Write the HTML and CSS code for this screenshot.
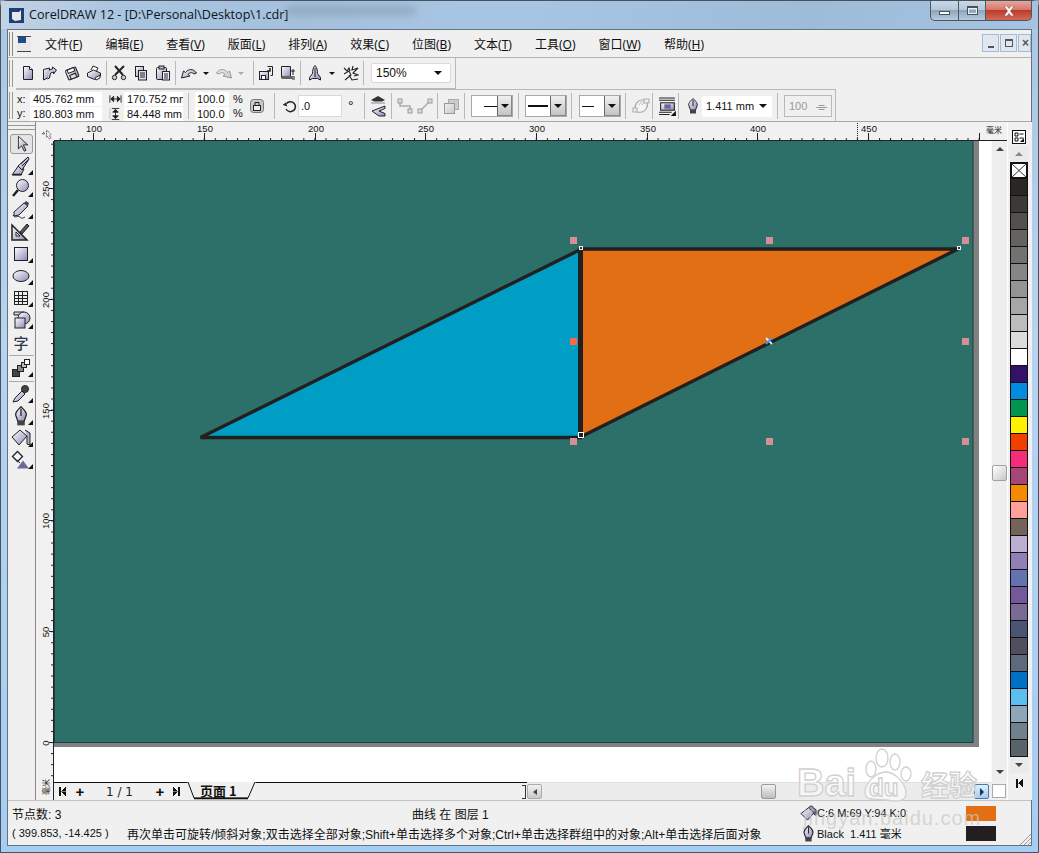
FILE: index.html
```html
<!DOCTYPE html>
<html lang="zh">
<head>
<meta charset="utf-8">
<title>CorelDRAW 12</title>
<link rel="stylesheet" href="styles.css">
</head>
<body>
<svg class="defs" xmlns="http://www.w3.org/2000/svg">
  <defs>
    <linearGradient id="g" x1="0" y1="0" x2="1" y2="1"><stop offset="0" stop-color="#fff"/><stop offset="1" stop-color="#8a8ab8"/></linearGradient>
    <linearGradient id="gd" x1="0" y1="0" x2="1" y2="1"><stop offset="0" stop-color="#eee"/><stop offset="1" stop-color="#c8c8d4"/></linearGradient>
    <pattern id="tickx" x="4.44" y="122" width="11.07" height="19" patternUnits="userSpaceOnUse"><rect x="0" y="16" width="1" height="2" fill="#222"/></pattern>
    <pattern id="ticky" x="36" y="10.72" width="18" height="11.08" patternUnits="userSpaceOnUse"><rect x="15" y="0" width="2" height="1" fill="#222"/></pattern>
    <symbol id="i-new" viewBox="0 0 16 16"><path d="M3.5 1.5h6l3 3v10h-9z" fill="url(#g)" stroke="#222"/><path d="M9.5 1.5v3h3" fill="#fff" stroke="#222"/></symbol>
    <symbol id="i-open" viewBox="0 0 16 16"><path d="M1.5 4.5l6-1.500v9l-6 3z" fill="url(#g)" stroke="#222"/><path d="M7.500 5l3-1V2l4 3-3 4V7l-3 1-1 5-2 1" fill="url(#g)" stroke="#222"/></symbol>
    <symbol id="i-save" viewBox="0 0 16 16"><g transform="rotate(-22 8 8)"><rect x="2.500" y="3.500" width="11" height="10" rx="1" fill="url(#g)" stroke="#222"/><rect x="4.500" y="3.500" width="7" height="3.500" fill="#fff" stroke="#222"/><rect x="5" y="9.500" width="6" height="4" fill="#ddd" stroke="#222"/></g></symbol>
    <symbol id="i-print" viewBox="0 0 16 16"><path d="M5 5l2-4 5 2-2 4" fill="#fff" stroke="#222"/><path d="M1.500 8l6-3 7 3v3l-6 3.500-7-3z" fill="url(#g)" stroke="#222"/><path d="M9 13l5-3v3l-4 2z" fill="#fff" stroke="#222"/></symbol>
    <symbol id="i-cut" viewBox="0 0 16 16"><path d="M4 1l8 9M13 1L4 10" stroke="#222" stroke-width="2" fill="none"/><circle cx="3.500" cy="12.500" r="2.200" fill="#ccd" stroke="#222"/><circle cx="12.500" cy="12.500" r="2.200" fill="#ccd" stroke="#222"/></symbol>
    <symbol id="i-copy" viewBox="0 0 16 16"><rect x="2.500" y="1.500" width="8" height="10" fill="url(#g)" stroke="#222"/><rect x="5.500" y="5.500" width="8" height="9.500" fill="#dde" stroke="#222"/><path d="M7 8h5M7 10h5M7 12h5" stroke="#222"/></symbol>
    <symbol id="i-paste" viewBox="0 0 16 16"><rect x="1.500" y="2.500" width="10" height="12" rx="1" fill="url(#g)" stroke="#222"/><rect x="4" y="1" width="5" height="3" fill="#bbc" stroke="#222"/><rect x="7.500" y="6.500" width="7" height="8.500" fill="#eef" stroke="#222"/><path d="M9 9h4M9 11h4M9 13h4" stroke="#222"/></symbol>
    <symbol id="i-undo" viewBox="0 0 16 16"><path d="M.5 13l2-7 2 1.500C7 4 12 3 15.500 8l-2.500 1C11 7 8 7.500 7 9.500l2 1.500z" fill="url(#g)" stroke="#222"/></symbol>
    <symbol id="i-redo" viewBox="0 0 16 16"><path d="M15.500 13l-2-7-2 1.500C9 4 4 3 .5 8L3 9c2-2 5-1.500 6 .5L7 11z" fill="url(#gd)" stroke="#999"/></symbol>
    <symbol id="i-import" viewBox="0 0 16 16"><rect x="1.500" y="6.500" width="9" height="8" fill="url(#g)" stroke="#222"/><rect x="3.500" y="10.500" width="4" height="4" fill="#fff" stroke="#222"/><path d="M9.500 1.500h5v9h-2" fill="#eee" stroke="#222"/><path d="M12 3v3H9" stroke="#222" stroke-width="1.500" fill="none"/></symbol>
    <symbol id="i-export" viewBox="0 0 16 16"><path d="M1.500 1.500h9v11h-9z" fill="url(#g)" stroke="#222"/><rect x="1.500" y="11" width="11" height="3" fill="#666"/><path d="M11 6h4M13 4v6M12 12h3M12 14h3" stroke="#222"/></symbol>
    <symbol id="i-launch" viewBox="0 0 16 16"><path d="M8 .5c2 2 2.500 5 2.500 8l3 4v2.500l-3-1.500h-5l-3 1.500V12.500l3-4c0-3 .5-6 2.500-8z" fill="url(#g)" stroke="#222"/><path d="M8 3v9" stroke="#222"/></symbol>
    <symbol id="i-online" viewBox="0 0 16 16"><path d="M1 3l3 3 2-3 1 3M1 9l5-3 2 4-6 5M6 10l3 5 6-1M10 1l-1 4 6-2-5 5 5 2-4 1" fill="none" stroke="#222" stroke-width="1.100"/></symbol>
    <symbol id="i-w" viewBox="0 0 14 14"><path d="M1 3v8M13 3v8M2 7h10M2 7l3-3v6zM12 7L9 4v6z" stroke="#222" fill="#222"/></symbol>
    <symbol id="i-h" viewBox="0 0 14 14"><path d="M3 1h8M3 13h8M7 2v10M7 2L4 5h6zM7 12L4 9h6z" stroke="#222" fill="#222"/><path d="M1 1v12" stroke="#999" stroke-dasharray="1 1"/></symbol>
    <symbol id="i-lock" viewBox="0 0 14 14"><rect x=".5" y=".5" width="13" height="13" rx="3" fill="#c8c8c8" stroke="#777"/><rect x="3.500" y="6.500" width="7" height="5" fill="#eee" stroke="#222"/><path d="M5 6V3.500h4V6" fill="none" stroke="#222"/></symbol>
    <symbol id="i-rot" viewBox="0 0 14 14"><path d="M3.500 4.500A5 5 0 1 1 3 10" fill="none" stroke="#222" stroke-width="1.500"/><path d="M0 7h5L2.500 3.500z" fill="#222" transform="rotate(20 3 5)"/></symbol>
    <symbol id="i-mirror" viewBox="0 0 16 24"><path d="M1 6l7-4 7 4-3 1.500H4z" fill="#333"/><path d="M1 9h14" stroke="#888"/><path d="M2 17l13-5v2.500L9 17l6 2.500V22H9z" fill="url(#g)" stroke="#222"/></symbol>
    <symbol id="i-node1" viewBox="0 0 16 16"><path d="M3 3v5h10v6" fill="none" stroke="#aaa" stroke-width="1.500"/><rect x="1" y="1" width="4" height="4" fill="#ddd" stroke="#999"/><rect x="11" y="11" width="4" height="4" fill="#ddd" stroke="#999"/></symbol>
    <symbol id="i-node2" viewBox="0 0 16 16"><path d="M3 13L13 3" stroke="#aaa" stroke-width="1.500"/><rect x="1" y="11" width="4" height="4" fill="#ddd" stroke="#999"/><rect x="11" y="1" width="4" height="4" fill="#ddd" stroke="#999"/></symbol>
    <symbol id="i-order" viewBox="0 0 16 16"><rect x="5.500" y="1.500" width="10" height="10" fill="#ccc" stroke="#aaa"/><rect x="1.500" y="5.500" width="10" height="10" fill="url(#gd)" stroke="#999"/></symbol>
    <symbol id="i-wrap" viewBox="0 0 18 16"><path d="M3 10c0-4 3-8 7-8h4c2 3 2 6 0 9-2 3-6 4-9 3" fill="#f4f4f4" stroke="#aaa" stroke-width="1.200"/><path d="M7 7l3-4M10 7l3-4" stroke="#bbb"/><rect x="1" y="10" width="4" height="4" fill="#eee" stroke="#aaa"/><rect x="12" y="1" width="5" height="4" fill="#eee" stroke="#aaa"/></symbol>
    <symbol id="i-order2" viewBox="0 0 16 18"><path d="M0 1h15M0 3h15" stroke="#222"/><rect x="1.500" y="5.500" width="13" height="7" fill="url(#g)" stroke="#222"/><rect x="5" y="7" width="6" height="4" fill="#6a64a8"/><path d="M0 14.500h12M0 16.500h10" stroke="#222"/><path d="M16 13v5h-5z" fill="#111"/></symbol>
    <symbol id="i-pen" viewBox="0 0 12 16"><path d="M6 .5c3 3 5 5 4 7.500l-1.500 4h-5L2 8C1 5.500 3 3.500 6 .5z" fill="url(#g)" stroke="#222"/><path d="M6 2v6" stroke="#222"/><rect x="3" y="12" width="6" height="3.500" fill="#444"/></symbol>
    <symbol id="i-fill" viewBox="0 0 18 18"><path d="M1 9l8-6 6 5-7 8z" fill="url(#g)" stroke="#222"/><path d="M9 3c2-3 5-2 5 0l3 2v6l-2-1V7" fill="#9a9ab8" stroke="#222"/></symbol>
    <symbol id="t-arrow" viewBox="0 0 20 20"><path d="M6 1.500v14l3.500-3.500 3 6 2-1-3-6h5z" fill="url(#g)" stroke="#222"/></symbol>
    <symbol id="t-shape" viewBox="0 0 20 20"><path d="M1 19L8 9l5 4-3 6z" fill="url(#g)" stroke="#222"/><path d="M7 10L17 1l1 2-7 11z" fill="url(#g)" stroke="#222"/><path d="M10 8l6-6M11 10l6-6" stroke="#222"/><path d="M2 18.500h9" stroke="#222" stroke-width="1.500"/></symbol>
    <symbol id="t-zoom" viewBox="0 0 20 20"><circle cx="11.500" cy="7.500" r="6" fill="url(#g)" stroke="#222"/><path d="M7 12L2 18" stroke="#222" stroke-width="2.500"/></symbol>
    <symbol id="t-free" viewBox="0 0 20 20"><path d="M3 12L13 3l4 3-9 9-5 1z" fill="url(#g)" stroke="#222"/><path d="M13 3l4 3 1-3-3-2z" fill="#444"/><path d="M2 15c2 4 5 0 7 2s3 1 5 0" fill="none" stroke="#222"/></symbol>
    <symbol id="t-dim" viewBox="0 0 20 20"><path d="M1 3v15h15z" fill="url(#g)" stroke="#222" stroke-width="1.500"/><path d="M5 10v4h4z" fill="#f0f0f0" stroke="#222"/><path d="M9 10l7-8 2 2-7 8z" fill="#555" stroke="#222"/></symbol>
    <symbol id="t-rect" viewBox="0 0 20 20"><rect x="3.500" y="3.500" width="13" height="13" fill="url(#g)" stroke="#222"/></symbol>
    <symbol id="t-ell" viewBox="0 0 20 20"><ellipse cx="10" cy="10" rx="8" ry="5.500" fill="url(#g)" stroke="#222"/></symbol>
    <symbol id="t-table" viewBox="0 0 20 20"><rect x="3.500" y="3.500" width="13" height="13" fill="#eee" stroke="#222"/><path d="M3.500 7.500h13M3.500 10.500h13M3.500 13.500h13M7.500 3.500v13M11.500 3.500v13" stroke="#222"/></symbol>
    <symbol id="t-shapes" viewBox="0 0 20 20"><path d="M3 2h10v3H3z" fill="url(#g)" stroke="#222"/><circle cx="13" cy="8" r="6" fill="url(#g)" stroke="#222"/><rect x="4" y="8" width="10" height="10" fill="url(#g)" stroke="#222"/></symbol>
    <symbol id="t-blend" viewBox="0 0 20 20"><rect x="1.500" y="11.500" width="7" height="7" fill="#444" stroke="#222"/><rect x="6.500" y="7.500" width="6" height="6" fill="#888" stroke="#222"/><rect x="10.500" y="4.500" width="5" height="5" fill="#bbb" stroke="#222"/><rect x="13.500" y="1.500" width="5" height="5" fill="#fff" stroke="#222"/></symbol>
    <symbol id="t-drop" viewBox="0 0 20 20"><path d="M2 18l2-4 7-7 3 3-7 7z" fill="url(#g)" stroke="#222"/><circle cx="14" cy="5" r="3.500" fill="#444" stroke="#222"/></symbol>
    <symbol id="t-fill" viewBox="0 0 20 20"><path d="M1 9l8-7 7 6-8 9z" fill="url(#g)" stroke="#222"/><path d="M14 2l5 3v12l-3-1V8" fill="#b0b0c8" stroke="#222"/></symbol>
    <symbol id="t-ifill" viewBox="0 0 20 20"><path d="M1.500 6.500l5-5 5 5-5 5z" fill="#f4f4f4" stroke="#222" stroke-width="1.300"/><path d="M4 9l5 4" stroke="#222"/><path d="M6 18.500l6-8 6 8z" fill="#6a6a9a"/></symbol>
  </defs>
</svg>
<div class="window">
  <header class="titlebar">
    <svg class="appicon" viewBox="0 0 15 15"><rect width="15" height="15" fill="#1b3f78"/><path d="M3 4h7l2-2v10l-6 1-3-2z" fill="#e8e8e8"/></svg>
    <span class="title">CorelDRAW 12 - [D:\Personal\Desktop\1.cdr]</span>
    <div class="smudge"></div>
    <div class="winctl">
      <div class="wbtn wmin"><span class="g-min"></span></div>
      <div class="wbtn wmax"><span class="g-max"></span></div>
      <div class="wbtn wclose"><svg class="g-x" viewBox="0 0 12 10"><path d="M1 0h3l2 2.500L8 0h3L7.500 5 11 10H8L6 7.500 4 10H1l3.500-5z" fill="#fff" stroke="#7a3a30" stroke-width=".5"/></svg></div>
    </div>
  </header>
  <div class="app">
    <nav class="menubar">
      <div class="grip"></div>
      <svg class="docicon" viewBox="0 0 14 16"><path d="M0 0h10l4 3v13H0z" fill="#e8e8e8"/><path d="M1 1h8v6H1z" fill="#1f4a8c"/><path d="M0 0h14v1H0zM0 15h14v1H0z" fill="#444"/></svg>
      <div class="menus">
        <span>文件(<u>F</u>)</span><span>编辑(<u>E</u>)</span><span>查看(<u>V</u>)</span><span>版面(<u>L</u>)</span><span>排列(<u>A</u>)</span><span>效果(<u>C</u>)</span><span>位图(<u>B</u>)</span><span>文本(<u>T</u>)</span><span>工具(<u>O</u>)</span><span>窗口(<u>W</u>)</span><span>帮助(<u>H</u>)</span>
      </div>
      <div class="mdi">
        <div class="mbtn"><span class="m-min"></span></div>
        <div class="mbtn"><span class="m-res"></span></div>
        <div class="mbtn mclip"><span class="m-x">×</span></div>
      </div>
    </nav>
    <div class="bar bar1">
      <div class="grip2"></div>
      <div class="row tools1">
        <svg class="ti"><use href="#i-new"/></svg><svg class="ti"><use href="#i-open"/></svg><svg class="ti"><use href="#i-save"/></svg><svg class="ti"><use href="#i-print"/></svg>
        <i class="sep"></i>
        <svg class="ti"><use href="#i-cut"/></svg><svg class="ti"><use href="#i-copy"/></svg><svg class="ti"><use href="#i-paste"/></svg>
        <i class="sep"></i>
        <svg class="ti ml4"><use href="#i-undo"/></svg><b class="drop"></b>
        <svg class="ti ml4"><use href="#i-redo"/></svg><b class="drop dis"></b>
        <i class="sep ml6"></i>
        <svg class="ti"><use href="#i-import"/></svg><svg class="ti"><use href="#i-export"/></svg>
        <i class="sep"></i>
        <svg class="ti ml5"><use href="#i-launch"/></svg><b class="drop"></b>
        <svg class="ti ml5"><use href="#i-online"/></svg>
        <i class="sep"></i>
        <div class="zoomcombo ml6"><span>150%</span><b class="arrow"></b></div>
      </div>
    </div>
    <div class="bar bar2">
      <div class="grip2"></div>
      <div class="row tools2">
        <div class="labels"><span>x:</span><span>y:</span></div>
        <div class="fields f72"><span>405.762 mm</span><span>180.803 mm</span></div>
        <div class="wh"><svg viewBox="0 0 14 14"><use href="#i-w"/></svg><svg viewBox="0 0 14 14"><use href="#i-h"/></svg></div>
        <div class="fields f59"><span>170.752 mm</span><span>84.448 mm</span></div>
        <i class="sep tall ml5"></i>
        <div class="fields f34 ml5"><span>100.0</span><span>100.0</span></div>
        <div class="labels pct"><span>%</span><span>%</span></div>
        <svg class="ico14 ml7"><use href="#i-lock"/></svg>
        <i class="sep tall ml10"></i>
        <svg class="ico14 ml7"><use href="#i-rot"/></svg>
        <div class="field-single ml1">.0</div>
        <span class="deg">°</span>
        <i class="sep tall ml0"></i>
        <svg class="mirror ml4"><use href="#i-mirror"/></svg>
        <i class="sep tall ml5"></i>
        <svg class="ico16 ml4"><use href="#i-node1"/></svg>
        <svg class="ico16 ml4"><use href="#i-node2"/></svg>
        <i class="sep tall ml4"></i>
        <svg class="ico16 ml4"><use href="#i-order"/></svg>
        <i class="sep tall ml5"></i>
        <div class="lcombo ml5"><i class="ln ln1"></i><b class="lbtn"><b class="arrow"></b></b></div>
        <i class="sep tall ml5"></i>
        <div class="lcombo ml5"><i class="ln ln2"></i><b class="lbtn"><b class="arrow"></b></b></div>
        <i class="sep tall ml4"></i>
        <div class="lcombo ml6"><i class="ln ln3"></i><b class="lbtn"><b class="arrow"></b></b></div>
        <i class="sep tall ml4"></i>
        <svg class="wrap ml5"><use href="#i-wrap"/></svg>
        <i class="sep tall ml2"></i>
        <svg class="ord2 ml5"><use href="#i-order2"/></svg>
        <i class="sep tall ml2"></i>
        <svg class="pen ml7"><use href="#i-pen"/></svg>
        <div class="pencombo ml3"><span>1.411 mm</span><b class="arrow"></b></div>
        <i class="sep tall ml5"></i>
        <div class="disbox ml5"><span>100</span><span class="dis-g">⌯</span></div>
      </div>
    </div>
    <div class="workspace">
      <aside class="toolbox">
        <div class="tool active"><svg><use href="#t-arrow"/></svg></div>
        <div class="tool more"><svg><use href="#t-shape"/></svg></div>
        <div class="tool more"><svg><use href="#t-zoom"/></svg></div>
        <div class="tool more"><svg><use href="#t-free"/></svg></div>
        <div class="tool"><svg><use href="#t-dim"/></svg></div>
        <div class="tool more"><svg><use href="#t-rect"/></svg></div>
        <div class="tool more"><svg><use href="#t-ell"/></svg></div>
        <div class="tool more"><svg><use href="#t-table"/></svg></div>
        <div class="tool more"><svg><use href="#t-shapes"/></svg></div>
        <div class="tool tool-text">字</div>
        <i class="tsep"></i>
        <div class="tool more"><svg><use href="#t-blend"/></svg></div>
        <i class="tsep"></i>
        <div class="tool more"><svg><use href="#t-drop"/></svg></div>
        <div class="tool more"><svg><use href="#i-pen"/></svg></div>
        <div class="tool more"><svg><use href="#t-fill"/></svg></div>
        <div class="tool more"><svg><use href="#t-ifill"/></svg></div>
      </aside>
      <div class="rcorner">
        <svg viewBox="0 0 12 12"><path d="M1 5h4M3 3v4M6 1l5 5-2 1 2 3-2 1-2-3-1 1z" fill="none" stroke="#222" stroke-dasharray="1 1"/></svg>
      </div>
      <svg class="rtop" viewBox="54 122 953 19" xmlns="http://www.w3.org/2000/svg">
        <rect x="54" y="122" width="953" height="19" fill="#f1f1f1"/>
        <rect x="54" y="122" width="925" height="19" fill="url(#tickx)"/>
        <path d="M93.500 133v7M204.500 133v7M315.500 133v7M425.500 133v7M536.500 133v7M647.500 133v7M757.500 133v7M868.500 133v7M979.500 133v7" stroke="#222"/>
        <path d="M857.500 123v17" stroke="#222" stroke-dasharray="1 1"/>
        <path d="M54 140.500h953" stroke="#222"/>
        <g class="rt" text-anchor="middle">
          <text x="94" y="132">100</text><text x="205" y="132">150</text><text x="316" y="132">200</text><text x="426" y="132">250</text><text x="537" y="132">300</text><text x="648" y="132">350</text><text x="758" y="132">400</text><text x="869" y="132">450</text>
        </g>
        <text class="rtu" x="986" y="133">毫米</text>
      </svg>
      <svg class="rleft" viewBox="36 141 18 659" xmlns="http://www.w3.org/2000/svg">
        <rect x="36" y="141" width="18" height="659" fill="#f1f1f1"/>
        <rect x="36" y="141" width="18" height="640" fill="url(#ticky)"/>
        <path d="M49 188.500h4M49 299.500h4M49 410.500h4M49 520.500h4M49 631.500h4M49 742.500h4" stroke="#222"/>
        <path d="M53.500 141v659" stroke="#222"/>
        <g class="rt" text-anchor="middle">
          <text transform="translate(48.500 189) rotate(-90)">250</text><text transform="translate(48.500 300) rotate(-90)">200</text><text transform="translate(48.500 411) rotate(-90)">150</text><text transform="translate(48.500 521) rotate(-90)">100</text><text transform="translate(48.500 632) rotate(-90)">50</text><text transform="translate(48.500 743) rotate(-90)">0</text>
        </g>
        <text class="rtu" transform="translate(49 795) rotate(-90)">毫米</text>
      </svg>
      <svg class="canvas" viewBox="54 141 937 641" xmlns="http://www.w3.org/2000/svg">
        <rect x="54" y="141" width="937" height="641" fill="#fff"/>
        <rect x="54" y="141" width="925" height="606" fill="#808080"/>
        <rect x="54.500" y="140.500" width="918.500" height="602" fill="#2c7069" stroke="#1b3f3b"/>
        <path d="M200.500 437.500L580.500 249.500V437.500z" fill="#009dc4" stroke="#231f20" stroke-width="3.400"/>
        <path d="M580.500 249H958L580.500 437z" fill="#e26f13" stroke="#231f20" stroke-width="3.400"/>
        <path d="M580.500 249v188" stroke="#231f20" stroke-width="5"/>
        <g fill="#d68e98">
          <rect x="570" y="237" width="7" height="7"/><rect x="766" y="237" width="7" height="7"/><rect x="962" y="237" width="7" height="7"/>
          <rect x="962" y="338" width="7" height="7"/><rect x="570" y="438" width="7" height="7"/><rect x="766" y="438" width="7" height="7"/><rect x="962" y="438" width="7" height="7"/>
        </g>
        <rect x="570" y="338" width="7" height="7" fill="#ff6644"/>
        <rect x="579.500" y="246.500" width="3" height="3" fill="#333" stroke="#eee"/>
        <rect x="957.500" y="246.500" width="3" height="3" fill="#333" stroke="#eee"/>
        <rect x="578.500" y="432.500" width="5" height="5" fill="#231f20" stroke="#fff"/>
        <path d="M766 338l6 6" stroke="#eee" stroke-width="1.800"/><path d="M772 338l-6 6" stroke="#3399ff" stroke-width="1.800"/>
      </svg>
      <div class="vscroll">
        <b class="up"></b>
        <div class="thumb"></div>
        <b class="down"></b>
      </div>
      <aside class="palette">
        <svg class="palopt" viewBox="0 0 14 14"><rect x=".5" y=".5" width="13" height="13" fill="#fff" stroke="#111"/><path d="M3 3h3v3H3zM3 8h3v3H3z" fill="#fff" stroke="#111"/><path d="M7.500 4h4M7.500 8h4" stroke="#111"/><path d="M12 8v4H8z" fill="#111"/></svg>
        <div class="palbtn"><b class="up grey"></b></div>
        <div class="swatches">
          <div class="sw nofill"><svg viewBox="0 0 16 15"><rect width="16" height="15" fill="#fff"/><path d="M0 0l16 15M16 0L0 15" stroke="#111"/></svg></div>
          <div class="sw p1"></div><div class="sw p2"></div><div class="sw p3"></div><div class="sw p4"></div><div class="sw p5"></div><div class="sw p6"></div><div class="sw p7"></div><div class="sw p8"></div><div class="sw p9"></div><div class="sw p10"></div><div class="sw p11"></div><div class="sw p12"></div><div class="sw p13"></div><div class="sw p14"></div><div class="sw p15"></div><div class="sw p16"></div><div class="sw p17"></div><div class="sw p18"></div><div class="sw p19"></div><div class="sw p20"></div><div class="sw p21"></div><div class="sw p22"></div><div class="sw p23"></div><div class="sw p24"></div><div class="sw p25"></div><div class="sw p26"></div><div class="sw p27"></div><div class="sw p28"></div><div class="sw p29"></div><div class="sw p30"></div><div class="sw p31"></div><div class="sw p32"></div><div class="sw p33"></div><div class="sw p34"></div>
        </div>
        <div class="palbtn"><b class="down"></b></div>
        <div class="palend"><span class="nav-first"></span></div>
      </aside>
      <div class="tabbar">
        <div class="pagectl">
          <span class="nav-first"></span>
          <span class="plus">+</span>
          <span class="pageno">1 / 1</span>
          <span class="plus plus2">+</span>
          <span class="nav-last"></span>
        </div>
        <svg class="pagetab" viewBox="0 0 69 18" xmlns="http://www.w3.org/2000/svg">
          <path d="M0 0h1l6 16h54l7-16h1" fill="none" stroke="#111"/>
          <path d="M7 16.500h54" stroke="#111" stroke-width="1.500"/>
          <text x="13" y="14" class="tabtext">页面 1</text>
        </svg>
        <div class="tabrest"><i class="tabmark"></i></div>
        <div class="hscroll">
          <div class="hbtn"><b class="tri-l"></b></div>
          <div class="hthumb"></div>
          <div class="hbtn hot"><b class="tri-r"></b></div>
        </div>
      </div>
      <div class="rcorner2"><i></i></div>
    </div>
    <footer class="status">
      <div class="st-main">
        <div class="st-row"><span class="w400">节点数: 3</span><span>曲线 在 图层 1</span></div>
        <div class="st-row"><span class="w115">( 399.853, -14.425 )</span><span>再次单击可旋转/倾斜对象;双击选择全部对象;Shift+单击选择多个对象;Ctrl+单击选择群组中的对象;Alt+单击选择后面对象</span></div>
      </div>
      <div class="st-side">
        <div class="st-row"><svg class="st-ic"><use href="#i-fill"/></svg><span class="st-text">C:6 M:69 Y:94 K:0</span><i class="st-sw sw-fill"></i></div>
        <div class="st-row"><svg class="st-ic"><use href="#i-pen"/></svg><span class="st-text">Black&nbsp; 1.411 毫米</span><i class="st-sw sw-line"></i></div>
      </div>
      <svg class="sizegrip" viewBox="0 0 12 12"><path d="M12 1L1 12M12 5l-7 7M12 9l-3 3" stroke="#999"/></svg>
    </footer>
  </div>
  <svg class="watermark" viewBox="790 740 200 90" xmlns="http://www.w3.org/2000/svg">
    <g class="wm-shape">
      <text x="797" y="795" class="wm-big">Bai</text>
      <ellipse cx="871" cy="768" rx="5" ry="8"/><ellipse cx="882" cy="757" rx="6" ry="9"/><ellipse cx="895" cy="761" rx="5" ry="8"/><ellipse cx="906" cy="773" rx="5" ry="7"/>
      <path d="M886 771c9 0 20 12 20 21s-8 9-20 7-20 2-21-7 11-21 21-21z"/>
      <text x="869" y="795" class="wm-du">du</text>
      <text x="921" y="795" class="wm-cn">经验</text>
    </g>
    <text x="803" y="824" class="wm-url">jingyan.baidu.com</text>
  </svg>
</div>
</body>
</html>
```

FILE: styles.css
```css
*{box-sizing:border-box}
html,body{margin:0;padding:0;height:100%;overflow:hidden;background:#8e9aa6}
body{font:12px "Noto Sans","Noto Sans CJK SC",sans-serif;color:#111}
.defs{display:block;width:0;height:0}
u{text-decoration:underline}
svg{display:block}
.window{position:relative;width:1039px;height:853px;padding:0 6px 6px;display:flex;flex-direction:column;border:1px solid #46525e;border-radius:7px 7px 0 0;background:linear-gradient(#a9c6e3 0,#b6d3f0 40%,#a6cdf2 100%)}
.titlebar{position:relative;height:28px;flex:none;display:flex;align-items:center;background:linear-gradient(100deg,#c3d3e3 0,#a9c5e1 120px,#a4c0dc 300px,#a8c6e4 500px,#9ebbd8 800px,#a5c3e0 1000px);margin:0 -6px;padding-left:8px}
.appicon{width:15px;height:15px}
.title{margin-left:5px;margin-top:-2px;font:12.6px "Open Sans",sans-serif;color:#0c1420;white-space:nowrap}
.smudge{position:absolute;left:285px;top:6px;width:130px;height:7px;background:#7c8ea2;filter:blur(4px);opacity:.6}
.winctl{position:absolute;right:6px;top:0;height:20px;display:flex}
.wbtn{height:20px;display:flex;align-items:center;justify-content:center;border:1px solid #4a5866;border-top:0;margin-left:-1px}
.wmin{width:29px;border-radius:0 0 0 5px;background:linear-gradient(#c9d8e6 0,#b4c8da 45%,#8ea6bc 50%,#b9cbdc 100%)}
.wmax{width:28px;background:linear-gradient(#c9d8e6 0,#b4c8da 45%,#8ea6bc 50%,#b9cbdc 100%)}
.wclose{width:47px;border-radius:0 0 5px 0;background:linear-gradient(#e6a79c 0,#d8786a 45%,#bd3b2c 50%,#d26a54 100%)}
.g-min{width:11px;height:4px;background:#fff;border:1px solid #46525e;margin-top:5px}
.g-max{width:11px;height:9px;background:transparent;border:1px solid #46525e;box-shadow:inset 0 0 0 1px #e8f0f6;border-top-width:2px}
.g-x{width:12px;height:10px}
.app{flex:1;min-height:0;display:flex;flex-direction:column;background:#f0f0f0;border:1px solid #66727e}
.menubar{height:28px;flex:none;display:flex;align-items:center;border-bottom:1px solid #b4b4b4;padding-left:1px}
.grip{width:4px;height:24px;border-left:1px solid #888;border-right:1px solid #888}
.docicon{width:14px;height:16px;margin-left:4px}
.menus{display:flex;gap:23px;margin-left:14px;white-space:nowrap;font-size:12px}
.mdi{display:flex;gap:1px;margin-left:auto;align-self:flex-start;margin-top:4px}
.mbtn{width:17px;height:18px;background:#dfe8f2;border:1px solid #a9bccd;display:flex;align-items:center;justify-content:center}
.mclip{width:13px;justify-content:flex-start;padding-left:3px}
.m-min{width:6px;height:2px;background:#555;margin-top:7px}
.m-res{width:8px;height:8px;border:1px solid #555;border-top-width:2px}
.m-x{font:bold 12px "Liberation Sans",sans-serif;color:#555}
.bar{flex:none;display:flex;align-items:stretch;padding-left:1px}
.bar1{height:31px}
.bar2{height:32px;padding-top:1px}
.grip2{width:4px;margin-top:2px;margin-bottom:2px;border-left:1px solid #999;border-right:1px solid #999}
.row{display:flex;align-items:center;margin-left:3px}
.tools1{width:440px;border-right:1px solid #b8b8b8;border-bottom:1px solid #b8b8b8;padding-left:1px}
.tools2{width:820px;border-right:1px solid #b8b8b8;border-top:1px solid #b8b8b8;margin-top:-1px;padding-top:1px;font-family:"Liberation Sans",sans-serif}
.ti{width:16px;height:16px;margin:0 3px;flex:none}
.sep{display:block;flex:none;width:1px;height:24px;background:#b8b8b8;margin:0 1px}
.sep.tall{height:26px}
.drop{display:block;width:12px;height:16px;flex:none;position:relative}
.drop::after{content:"";display:block;margin:7px auto 0;width:0;height:0;border:3px solid transparent;border-top:3px solid #111;border-bottom:0}
.drop.dis::after{border-top-color:#aaa}
.ml0{margin-left:0}.ml1{margin-left:1px}.ml2{margin-left:2px}.ml3{margin-left:3px}.ml4{margin-left:4px}.ml5{margin-left:5px}.ml6{margin-left:6px}.ml7{margin-left:7px}.ml8{margin-left:8px}.ml9{margin-left:9px}.ml10{margin-left:10px}
.zoomcombo{width:80px;height:20px;flex:none;background:#fff;border:1px solid #d8d8d8;border-radius:2px;display:flex;align-items:center;justify-content:space-between;padding:0 8px 0 4px;font:12px "Liberation Sans",sans-serif}
.arrow{display:block;width:0;height:0;border:4px solid transparent;border-top:4px solid #111;border-bottom:0}
.labels{display:flex;flex-direction:column;font-size:11px;line-height:14.500px;width:13px;color:#111;flex:none}
.tools2>.labels:first-child{margin-left:1px}
.fields{display:flex;flex-direction:column;gap:1px;font-size:11px;flex:none}
.fields span{display:block;height:14px;line-height:14px;background:#fff;padding-left:3px;overflow:hidden;white-space:nowrap}
.f72{width:72px}.f59{width:59px}.f34{width:34px}
.f34 span{padding-left:2px}
.wh{display:flex;flex-direction:column;gap:1px;margin:0 2px 0 7px;flex:none}
.wh svg{width:13px;height:14px}
.pct{margin-left:4px;width:10px}
.ico14{width:14px;height:14px;flex:none}
.ico16{width:16px;height:16px;flex:none}
.field-single{width:44px;height:22px;line-height:20px;flex:none;background:#fff;border:1px solid #d8d8d8;padding-left:2px;font-size:11px}
.deg{width:22px;flex:none;font-size:14px;padding-left:6px}
.mirror{width:16px;height:24px;flex:none}
.lcombo{width:42px;height:22px;background:#fff;border:1px solid #a8a8a8;display:flex;align-items:center;flex:none}
.ln{display:block;background:#111;height:1px;margin-left:6px}
.ln1{width:14px;margin-left:12px}
.ln2{width:20px;height:2px;margin-left:2px}
.ln3{width:12px;margin-left:2px}
.lbtn{margin-left:auto;width:16px;height:20px;display:flex;align-items:center;justify-content:center;background:linear-gradient(#f0f0f0,#c4c4c4);border-left:1px solid #666;border-right:1px solid #888;border-bottom:1px solid #888}
.wrap{width:18px;height:16px;flex:none}
.ord2{width:17px;height:19px;flex:none}
.pen{width:12px;height:16px;flex:none}
.pencombo{width:70px;height:21px;background:#fff;display:flex;align-items:center;justify-content:space-between;padding:0 5px 0 4px;font-size:11px;flex:none;border-radius:2px;white-space:nowrap}
.disbox{width:48px;height:22px;background:#f0f0f0;border:1px solid #b8b8b8;color:#999;display:flex;align-items:center;justify-content:space-between;padding:0 4px;font-size:11px;flex:none}
.dis-g{font-size:14px}
.workspace{flex:none;height:679px;border-top:1px solid #a8a8a8;display:grid;grid-template-columns:27px 1px 18px 937px 16px 25px;grid-template-rows:19px 641px 18px}
.toolbox{grid-column:1/3;grid-row:1/4;border-right:1px solid #888;display:flex;flex-direction:column;padding-top:10px}
.toolbox::before{content:"";display:block;margin:-7px 0 1px;height:3px;border-top:1px solid #999;border-bottom:1px solid #999}
.tool{height:22px;flex:none;display:flex;align-items:center;justify-content:center;position:relative;width:26px}
.tool svg{width:20px;height:20px}
.tool.active{background:#e4e4e4;border:1px solid #999;border-radius:3px;margin:3px 0 1px 2px;width:23px;height:20px}
.tool.active svg{width:18px;height:18px}
.tool.more::after{content:"";position:absolute;right:1px;bottom:2px;width:0;height:0;border-left:5px solid transparent;border-bottom:5px solid #111}
.tool-text{font:500 15px "Noto Sans CJK SC",sans-serif;color:#33334a}
.tsep{display:block;height:1px;background:#aaa;margin:2px 1px 1px;flex:none}
.rcorner{grid-column:3;grid-row:1;background:#f1f1f1;padding:7px 0 0 5px}
.rcorner svg{width:11px;height:11px}
.rtop{grid-column:4/6;grid-row:1;width:953px;height:19px}
.rleft{grid-column:3;grid-row:2/4;width:18px;height:659px}
.rt text{font:9.500px "Liberation Sans",sans-serif;fill:#111}
.rtu{font:8px "Noto Sans CJK SC",sans-serif;fill:#111}
.canvas{grid-column:4;grid-row:2;width:937px;height:641px}
.vscroll{grid-column:5;grid-row:2;display:flex;flex-direction:column;align-items:center;background:#eeeeee;border-left:1px solid #f8f8f8;padding-top:6px}
.up{display:block;width:0;height:0;border:4px solid transparent;border-bottom:4px solid #444;border-top:0}
.up.grey{border-bottom-color:#888}
.down{display:block;width:0;height:0;border:4px solid transparent;border-top:4px solid #444;border-bottom:0}
.thumb{width:15px;height:16px;margin-top:314px;background:linear-gradient(135deg,#fff,#c8c8c8);border:1px solid #a0a0a0;border-radius:2px}
.vscroll .down{margin-top:289px}
.palette{grid-column:6;grid-row:1/4;display:flex;flex-direction:column;align-items:center;border-left:1px solid #fff;background:#f0f0f0;padding:8px 2px 0 0}
.palopt{width:14px;height:14px;flex:none;margin-bottom:2px}
.palbtn{width:19px;height:16px;flex:none;display:flex;align-items:center;justify-content:center;background:#eaeaea}
.swatches{flex:none;width:18px}
.sw{height:17px;border:1px solid #111;border-top-width:0;width:18px}
.nofill{border:2px solid #111;padding:0}
.nofill svg{width:14px;height:13px}
.p1{background:#2a2722}.p2{background:#3d3a36}.p3{background:#54514d}.p4{background:#656360}.p5{background:#727270}.p6{background:#868686}.p7{background:#949494}.p8{background:#a6a6a6}.p9{background:#bcbcbc}.p10{background:#dcdcdc}.p11{background:#fff}.p12{background:#341268}.p13{background:#008ce0}.p14{background:#009650}.p15{background:#fff200}.p16{background:#f04000}.p17{background:#f52d78}.p18{background:#a54676}.p19{background:#f58a00}.p20{background:#ffa09c}.p21{background:#736358}.p22{background:#bcb0d2}.p23{background:#9080b5}.p24{background:#6472b0}.p25{background:#74589b}.p26{background:#796b93}.p27{background:#4a5575}.p28{background:#534d60}.p29{background:#5d6a7c}.p30{background:#0070c4}.p31{background:#5cbdf0}.p32{background:#8ea6b8}.p33{background:#6f818d}.p34{background:#5a6468}
.palend{margin-top:3px;height:14px;display:flex;align-items:center}
.nav-first,.nav-last{display:block;width:7px;height:9px;flex:none}
.nav-first{border-left:2px solid #111;background:linear-gradient(to bottom right,transparent 50%,#111 50%) top/100% 50% no-repeat,linear-gradient(to top right,transparent 50%,#111 50%) bottom/100% 50% no-repeat}
.nav-last{border-right:2px solid #111;margin-left:7px;background:linear-gradient(to bottom left,transparent 50%,#111 50%) top/100% 50% no-repeat,linear-gradient(to top left,transparent 50%,#111 50%) bottom/100% 50% no-repeat}
.tabbar{grid-column:4;grid-row:3;display:flex;background:#f0f0f0;height:18px}
.pagectl{width:133px;flex:none;display:flex;align-items:center;border-top:1px solid #111;padding-left:5px}
.plus{font:bold 15px "Liberation Sans",sans-serif;width:12px;margin-left:8px;color:#111;text-align:center;flex:none}
.plus2{margin-left:6px}
.pageno{width:42px;margin-left:20px;flex:none;font:12px "DejaVu Sans",sans-serif;color:#222}
.pagetab{width:69px;height:18px;flex:none}
.tabtext{font:bold 13px "Noto Sans CJK SC",sans-serif;fill:#111}
.tabrest{width:271px;flex:none;border-top:1px solid #111;display:flex;justify-content:flex-end;padding-top:2px}
.tabmark{display:block;width:4px;height:14px;border:1px solid #333;border-left:0;margin-right:1px}
.hscroll{flex:1;display:flex;align-items:center;justify-content:space-between;background:#ececec;border-top:1px solid #e0e0e0;padding-right:2px}
.hbtn{width:15px;height:15px;flex:none;background:linear-gradient(#f2f2f2,#c8c8c8);border:1px solid #aaa;border-radius:2px;display:flex;align-items:center;justify-content:center}
.hbtn.hot{background:linear-gradient(#e4f0fb,#a8c8e8);border-color:#3c7fb1}
.hthumb{width:15px;height:15px;flex:none;margin-left:219px;margin-right:auto;background:linear-gradient(#f2f2f2,#bdbdbd);border:1px solid #999;border-radius:2px}
.tri-l{display:block;width:0;height:0;border:3px solid transparent;border-right:4px solid #444;border-left:0}
.tri-r{display:block;width:0;height:0;border:4px solid transparent;border-left:4px solid #0a3a66;border-right:0}
.rcorner2{grid-column:5;grid-row:3;background:#f0f0f0;display:flex;align-items:center;justify-content:center}
.rcorner2 i{display:block;width:14px;height:14px;background:#fff;border:1px solid #aaa}
.status{height:45px;flex:none;border-top:1px solid #c4c4c4;display:flex;padding:2px 0 0 4px;position:relative;font:12px "Liberation Sans","Noto Sans CJK SC",sans-serif;color:#111}
.st-main{width:788px;flex:none;display:flex;flex-direction:column}
.st-row{height:20px;display:flex;align-items:center;white-space:nowrap}
.w400{width:400px;flex:none}
.w115{width:115px;flex:none;font-size:11px}
.st-side{flex:1;display:flex;flex-direction:column}
.st-ic{width:17px;height:17px;flex:none}
.st-text{width:149px;font-size:11px;flex:none}
.st-sw{display:block;width:30px;height:15px;flex:none}
.sw-fill{background:#e26f13}
.sw-line{background:#231f20}
.sizegrip{position:absolute;right:0;bottom:0;width:12px;height:12px}
.watermark{position:absolute;left:789px;top:740px;width:200px;height:90px;pointer-events:none}
.wm-shape>*{fill:rgba(255,255,255,.55);stroke:#d0d0d0;stroke-width:1.300}
.wm-big{font:bold 38px "Liberation Sans",sans-serif}
.wm-du{font:bold 24px "Liberation Sans",sans-serif}
.wm-cn{font:bold 28px "Noto Sans CJK SC",sans-serif}
.wm-url{font:20px "Liberation Sans",sans-serif;letter-spacing:1px;fill:rgba(200,200,200,.7)}
```
